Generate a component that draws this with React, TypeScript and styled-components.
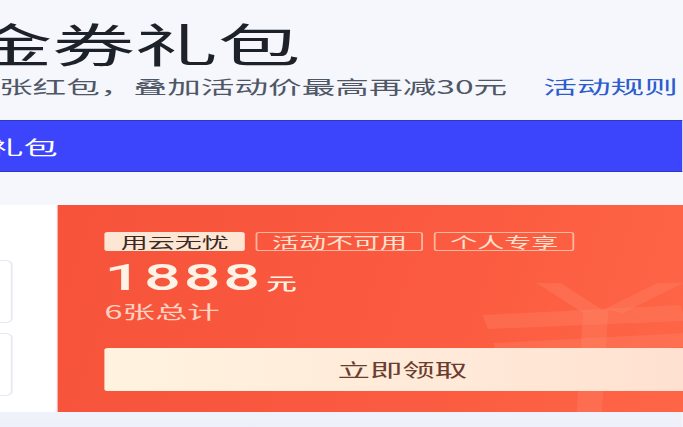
import React from 'react'
import styled, { createGlobalStyle } from 'styled-components'

// the reference is a crop of a page that was stretched sideways
const STRETCH = 1.8

const GlobalStyle = createGlobalStyle`
  html, body {
    margin: 0;
    padding: 0;
    overflow: hidden;
  }
  body {
    background: #f5f7fc;
    font-family: "Noto Sans CJK SC", "Noto Sans", sans-serif;
  }
`

const Viewport = styled.div`
  width: ${683 / STRETCH}px;
  height: 427px;
  transform: scaleX(${STRETCH});
  transform-origin: 0 0;
  background: linear-gradient(180deg, #f5f7fc 0, #f5f7fc 380px, #edf0fa 100%);
`

const Page = styled.div`
  margin-left: -63px;
  display: flex;
  flex-direction: column;
`

const Header = styled.header`
  padding-top: 15px;
`

const Title = styled.h1`
  margin: 0;
  font-size: 46px;
  line-height: 1.2;
  font-weight: 400;
  color: #1d2129;
  white-space: nowrap;
`

const Subtitle = styled.p`
  margin: 3px 0 0 -4px;
  font-size: 18.7px;
  line-height: 26px;
  color: #4f5666;
  white-space: nowrap;
`

const RuleLink = styled.a`
  margin-left: 20px;
  color: #2d5ccf;
  text-decoration: none;
`

const TabBar = styled.nav`
  margin-top: 21px;
  height: 52px;
  display: flex;
  align-items: center;
  background: #3c45fb;
  border-top: 1px solid #3037c4;
  border-bottom: 1px solid #3037c4;
  box-sizing: border-box;
`

const TabLabel = styled.span`
  color: #ffffff;
  font-size: 19px;
  white-space: nowrap;
`

const CardRow = styled.section`
  margin-top: 33px;
  display: flex;
  gap: 1px;
`

const SidePanel = styled.aside`
  width: 93.5px;
  flex-shrink: 0;
  box-sizing: border-box;
  padding: 55px 24px 0 0;
  background: #ffffff;
  display: flex;
  flex-direction: column;
  gap: 10px;
`

const SideCard = styled.div`
  height: 63px;
  border: 1px solid #e7e9f0;
  border-radius: 4px;
  box-sizing: border-box;
`

const CouponCard = styled.div`
  position: relative;
  width: 384px;
  flex-shrink: 0;
  box-sizing: border-box;
  padding: 27px 26.6px 21px;
  overflow: hidden;
  background: linear-gradient(100deg, #f6533a 0%, #fb5b40 55%, #ff6848 100%);
`

const Watermark = styled.svg`
  position: absolute;
  left: 222px;
  top: 78px;
  width: 140px;
  height: 140px;
  pointer-events: none;
`

const CardBody = styled.div`
  position: relative;
  display: flex;
  flex-direction: column;
`

const TagRow = styled.div`
  display: flex;
  gap: 6px;
`

const Tag = styled.span<{ $solid?: boolean }>`
  font-size: 15px;
  line-height: 17px;
  padding: 0 8px;
  border-radius: 2px;
  white-space: nowrap;
  border: 1px solid ${({ $solid }) => ($solid ? '#fde7d4' : 'rgba(255, 222, 200, 0.7)')};
  background: ${({ $solid }) => ($solid ? '#fde7d4' : 'transparent')};
  color: ${({ $solid }) => ($solid ? '#3b2a22' : '#ffe1cf')};
`

const AmountRow = styled.div`
  margin-top: 8.5px;
  display: flex;
  align-items: baseline;
  line-height: 1;
  color: #fff3e6;
`

const Amount = styled.span`
  font-family: Roboto, "Liberation Sans", sans-serif;
  font-size: 36px;
  font-weight: 500;
  letter-spacing: 1.5px;
`

const Unit = styled.span`
  margin-left: 2px;
  font-size: 17px;
  font-weight: 500;
`

const Note = styled.div`
  margin-top: 5px;
  font-size: 18px;
  line-height: 20px;
  color: #ffd2c2;
`

const ClaimButton = styled.button`
  margin-top: 27px;
  height: 43px;
  width: 100%;
  border: none;
  border-radius: 2px;
  background: linear-gradient(90deg, #fff3df 0%, #ffe9d8 60%, #ffe0d0 100%);
  color: #6a3d2f;
  font-family: inherit;
  font-size: 18px;
  cursor: pointer;
`

const tags = [
  { label: '用云无忧', solid: true },
  { label: '活动不可用', solid: false },
  { label: '个人专享', solid: false },
]

export default function App() {
  return (
    <>
      <GlobalStyle />
      <Viewport>
        <Page>
          <Header>
            <Title>代金券礼包</Title>
            <Subtitle>
              可领取6张红包，叠加活动价最高再减30元
              <RuleLink href="#">活动规则</RuleLink>
            </Subtitle>
          </Header>
          <TabBar>
            <TabLabel>代金券礼包</TabLabel>
          </TabBar>
          <CardRow>
            <SidePanel>
              <SideCard />
              <SideCard />
            </SidePanel>
            <CouponCard>
              <Watermark viewBox="0 0 140 140">
                <g fill="rgba(255, 140, 108, 0.3)">
                  <polygon points="44,0 54,-4 80,26 70,30" />
                  <polygon points="118,-6 128,-2 92,30 82,26" />
                  <polygon points="14,32 124,22 127,38 17,46" />
                  <polygon points="20,60 128,50 130,64 22,72" />
                  <polygon points="70,28 84,26 80,140 66,140" />
                </g>
              </Watermark>
              <CardBody>
                <TagRow>
                  {tags.map((tag) => (
                    <Tag key={tag.label} $solid={tag.solid}>
                      {tag.label}
                    </Tag>
                  ))}
                </TagRow>
                <AmountRow>
                  <Amount>1888</Amount>
                  <Unit>元</Unit>
                </AmountRow>
                <Note>6张总计</Note>
                <ClaimButton>立即领取</ClaimButton>
              </CardBody>
            </CouponCard>
          </CardRow>
        </Page>
      </Viewport>
    </>
  )
}
